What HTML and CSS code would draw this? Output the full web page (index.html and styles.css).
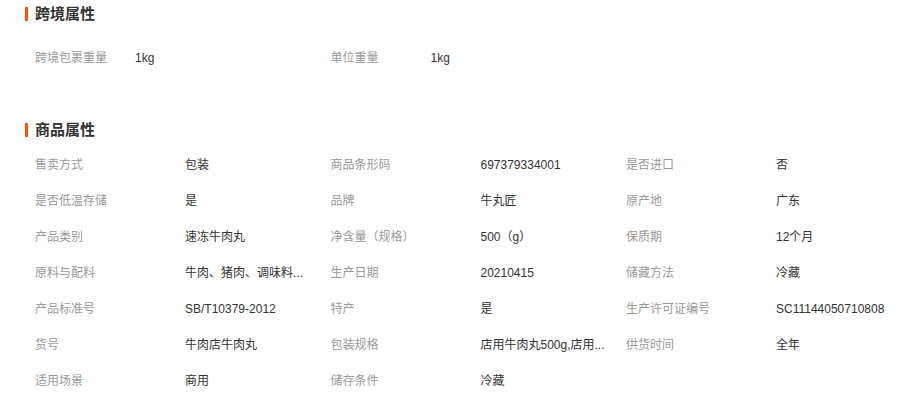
FILE: index.html
```html
<!DOCTYPE html>
<html lang="zh-CN">
<head>
<meta charset="utf-8">
<title>商品属性</title>
<link rel="stylesheet" href="styles.css">
</head>
<body>
<div class="page">
  <section class="section section-cross">
    <h2 class="title">跨境属性</h2>
    <div class="grid grid-cross">
      <div class="item"><span class="label">跨境包裹重量</span><span class="value">1kg</span></div>
      <div class="item"><span class="label">单位重量</span><span class="value">1kg</span></div>
    </div>
  </section>
  <section class="section section-goods">
    <h2 class="title">商品属性</h2>
    <div class="grid grid-goods">
      <div class="item"><span class="label">售卖方式</span><span class="value">包装</span></div>
      <div class="item"><span class="label">商品条形码</span><span class="value">697379334001</span></div>
      <div class="item"><span class="label">是否进口</span><span class="value">否</span></div>
      <div class="item"><span class="label">是否低温存储</span><span class="value">是</span></div>
      <div class="item"><span class="label">品牌</span><span class="value">牛丸匠</span></div>
      <div class="item"><span class="label">原产地</span><span class="value">广东</span></div>
      <div class="item"><span class="label">产品类别</span><span class="value">速冻牛肉丸</span></div>
      <div class="item"><span class="label">净含量（规格）</span><span class="value">500（g）</span></div>
      <div class="item"><span class="label">保质期</span><span class="value">12个月</span></div>
      <div class="item"><span class="label">原料与配料</span><span class="value" title="牛肉、猪肉、调味料">牛肉、猪肉、调味料...</span></div>
      <div class="item"><span class="label">生产日期</span><span class="value">20210415</span></div>
      <div class="item"><span class="label">储藏方法</span><span class="value">冷藏</span></div>
      <div class="item"><span class="label">产品标准号</span><span class="value">SB/T10379-2012</span></div>
      <div class="item"><span class="label">特产</span><span class="value">是</span></div>
      <div class="item"><span class="label">生产许可证编号</span><span class="value">SC11144050710808</span></div>
      <div class="item"><span class="label">货号</span><span class="value">牛肉店牛肉丸</span></div>
      <div class="item"><span class="label">包装规格</span><span class="value" title="店用牛肉丸500g,店用">店用牛肉丸500g,店用...</span></div>
      <div class="item"><span class="label">供货时间</span><span class="value">全年</span></div>
      <div class="item"><span class="label">适用场景</span><span class="value">商用</span></div>
      <div class="item"><span class="label">储存条件</span><span class="value">冷藏</span></div>
    </div>
  </section>
</div>
</body>
</html>
```
FILE: styles.css
```css
html, body {
  margin: 0;
  padding: 0;
  background: #fff;
}
body {
  font-family: "Liberation Sans", "Noto Sans CJK SC", sans-serif;
  font-size: 12px;
  color: #333;
}
.page {
  padding-left: 25px;
}
.title {
  display: flex;
  align-items: center;
  margin: 0;
  font-size: 15px;
  line-height: 20px;
  font-weight: bold;
  color: #333;
}
.title::before {
  content: "";
  width: 3px;
  height: 14px;
  background: #ff5000;
  margin-right: 7px;
}
.section-cross {
  padding-top: 4px;
}
.section-goods {
  margin-top: 44px;
}
.grid {
  display: grid;
  grid-template-columns: repeat(3, 295.5px);
  padding-left: 10px;
}
.grid-cross {
  margin-top: 16px;
}
.grid-goods {
  margin-top: 7px;
}
.item {
  display: flex;
  height: 36px;
  line-height: 36px;
  white-space: nowrap;
}
.label {
  color: #999;
  flex: none;
  width: 150px;
}
.grid-cross .label {
  width: 100px;
}
.value {
  color: #333;
}
```
